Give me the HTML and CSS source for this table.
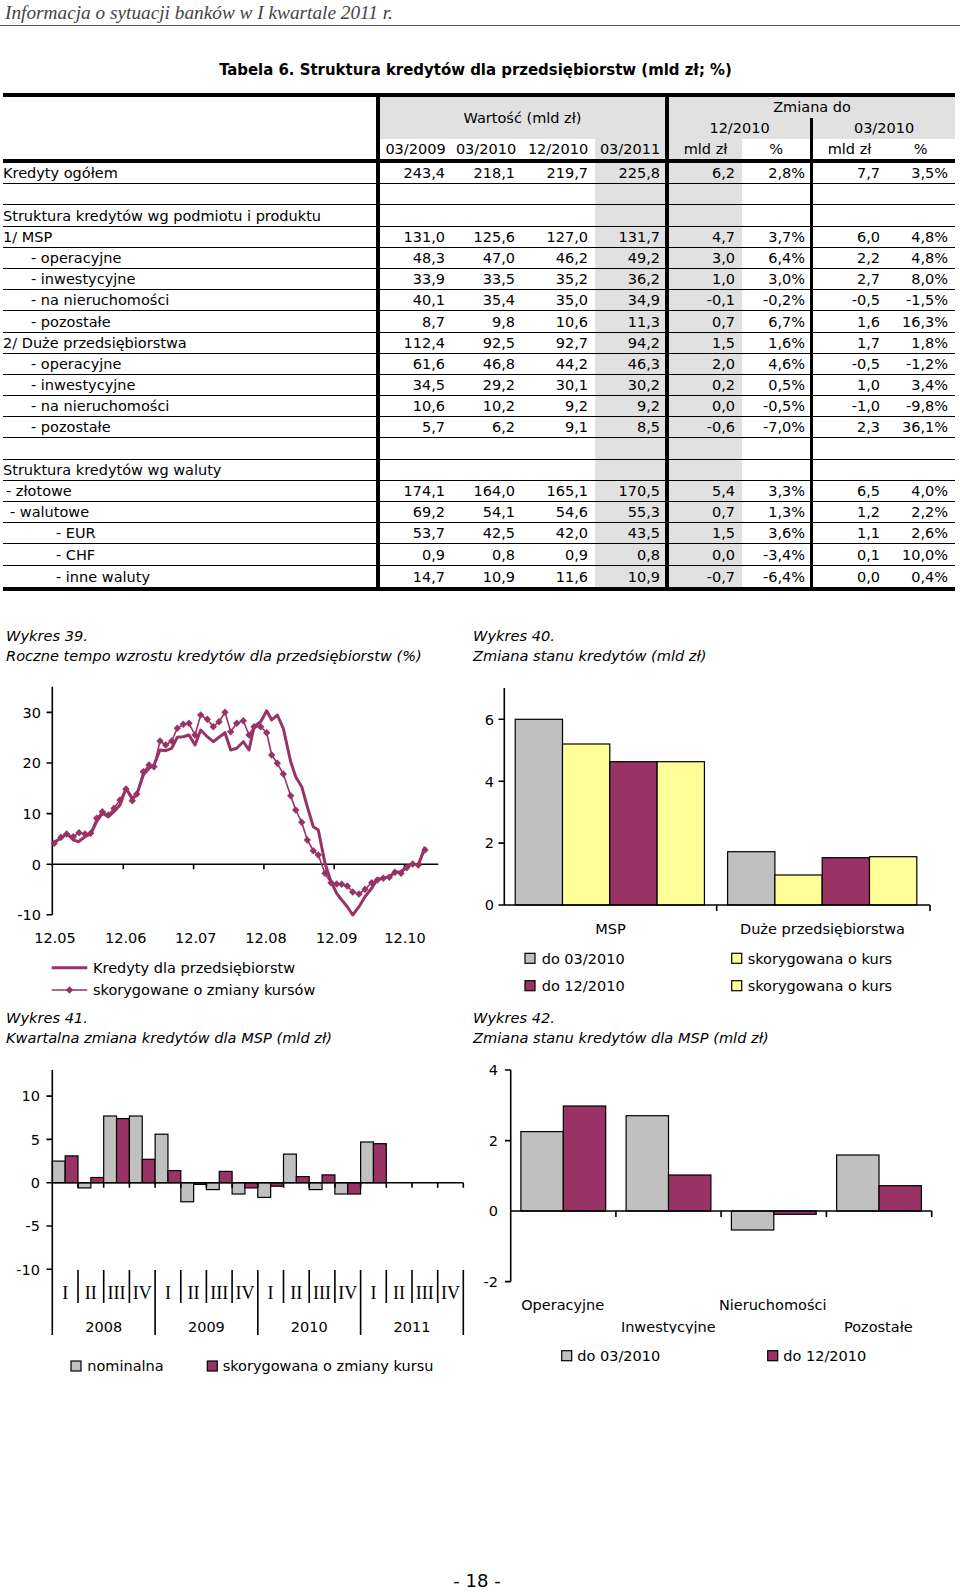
FILE: index.html
```html
<!DOCTYPE html>
<html lang="pl">
<head>
<meta charset="utf-8">
<title>Informacja o sytuacji banków w I kwartale 2011 r.</title>
<link rel="stylesheet" href="styles.css">
</head>
<body>
<header class="running-head">Informacja o sytuacji banków w I kwartale 2011 r.</header>

<h1 class="title">Tabela 6. Struktura kredytów dla przedsiębiorstw (mld zł; %)</h1>

<table class="tbl">
  <colgroup>
    <col class="w-lab"><col class="w1"><col class="w2"><col class="w3"><col class="w4">
    <col class="w5"><col class="w6"><col class="w7"><col class="w8">
  </colgroup>
  <thead>
    <tr class="h1">
      <th rowspan="3" class="corner"></th>
      <th colspan="4" rowspan="2" class="g b4">Wartość (mld zł)</th>
      <th colspan="4" class="g b4">Zmiana do</th>
    </tr>
    <tr class="h2">
      <th colspan="2" class="g b4">12/2010</th>
      <th colspan="2" class="g b3">03/2010</th>
    </tr>
    <tr class="h3">
      <th class="b4">03/2009</th><th>03/2010</th><th>12/2010</th><th class="g">03/2011</th>
      <th class="g b4">mld zł</th><th>%</th><th class="b3">mld zł</th><th>%</th>
    </tr>
  </thead>
  <tbody>
    <tr><td>Kredyty ogółem</td><td>243,4</td><td>218,1</td><td>219,7</td><td>225,8</td><td>6,2</td><td>2,8%</td><td>7,7</td><td>3,5%</td></tr>
    <tr><td></td><td></td><td></td><td></td><td></td><td></td><td></td><td></td><td></td></tr>
    <tr><td>Struktura kredytów wg podmiotu i produktu</td><td></td><td></td><td></td><td></td><td></td><td></td><td></td><td></td></tr>
    <tr><td>1/ MSP</td><td>131,0</td><td>125,6</td><td>127,0</td><td>131,7</td><td>4,7</td><td>3,7%</td><td>6,0</td><td>4,8%</td></tr>
    <tr><td class="d1">- operacyjne</td><td>48,3</td><td>47,0</td><td>46,2</td><td>49,2</td><td>3,0</td><td>6,4%</td><td>2,2</td><td>4,8%</td></tr>
    <tr><td class="d1">- inwestycyjne</td><td>33,9</td><td>33,5</td><td>35,2</td><td>36,2</td><td>1,0</td><td>3,0%</td><td>2,7</td><td>8,0%</td></tr>
    <tr><td class="d1">- na nieruchomości</td><td>40,1</td><td>35,4</td><td>35,0</td><td>34,9</td><td>-0,1</td><td>-0,2%</td><td>-0,5</td><td>-1,5%</td></tr>
    <tr><td class="d1">- pozostałe</td><td>8,7</td><td>9,8</td><td>10,6</td><td>11,3</td><td>0,7</td><td>6,7%</td><td>1,6</td><td>16,3%</td></tr>
    <tr><td>2/ Duże przedsiębiorstwa</td><td>112,4</td><td>92,5</td><td>92,7</td><td>94,2</td><td>1,5</td><td>1,6%</td><td>1,7</td><td>1,8%</td></tr>
    <tr><td class="d1">- operacyjne</td><td>61,6</td><td>46,8</td><td>44,2</td><td>46,3</td><td>2,0</td><td>4,6%</td><td>-0,5</td><td>-1,2%</td></tr>
    <tr><td class="d1">- inwestycyjne</td><td>34,5</td><td>29,2</td><td>30,1</td><td>30,2</td><td>0,2</td><td>0,5%</td><td>1,0</td><td>3,4%</td></tr>
    <tr><td class="d1">- na nieruchomości</td><td>10,6</td><td>10,2</td><td>9,2</td><td>9,2</td><td>0,0</td><td>-0,5%</td><td>-1,0</td><td>-9,8%</td></tr>
    <tr><td class="d1">- pozostałe</td><td>5,7</td><td>6,2</td><td>9,1</td><td>8,5</td><td>-0,6</td><td>-7,0%</td><td>2,3</td><td>36,1%</td></tr>
    <tr><td></td><td></td><td></td><td></td><td></td><td></td><td></td><td></td><td></td></tr>
    <tr><td>Struktura kredytów wg waluty</td><td></td><td></td><td></td><td></td><td></td><td></td><td></td><td></td></tr>
    <tr><td class="d0">- złotowe</td><td>174,1</td><td>164,0</td><td>165,1</td><td>170,5</td><td>5,4</td><td>3,3%</td><td>6,5</td><td>4,0%</td></tr>
    <tr><td class="dw">- walutowe</td><td>69,2</td><td>54,1</td><td>54,6</td><td>55,3</td><td>0,7</td><td>1,3%</td><td>1,2</td><td>2,2%</td></tr>
    <tr><td class="d2">- EUR</td><td>53,7</td><td>42,5</td><td>42,0</td><td>43,5</td><td>1,5</td><td>3,6%</td><td>1,1</td><td>2,6%</td></tr>
    <tr><td class="d2">- CHF</td><td>0,9</td><td>0,8</td><td>0,9</td><td>0,8</td><td>0,0</td><td>-3,4%</td><td>0,1</td><td>10,0%</td></tr>
    <tr><td class="d2">- inne waluty</td><td>14,7</td><td>10,9</td><td>11,6</td><td>10,9</td><td>-0,7</td><td>-6,4%</td><td>0,0</td><td>0,4%</td></tr>
  </tbody>
</table>

<section class="charts">
  <figure class="chart left">
    <figcaption class="cap">Wykres 39.<br>Roczne tempo wzrostu kredytów dla przedsiębiorstw (%)</figcaption>
    <svg class="plot" width="470" height="342" viewBox="0 666 470 342">
      <defs>
        <marker id="dia" viewBox="-4 -4 8 8" markerWidth="8" markerHeight="8" markerUnits="userSpaceOnUse">
          <path d="M0 -3.7 L3.7 0 L0 3.7 L-3.7 0Z" class="mk"/>
        </marker>
      </defs>
      <path class="ax" d="M52.3 686.7V914.8 M46.5 712.4H52.3 M46.5 763H52.3 M46.5 813.6H52.3 M46.5 864.2H52.3 M46.5 914.8H52.3 M52.3 864.2H438.3 M123.3 864.2v5 M193.6 864.2v5 M263.9 864.2v5 M334.2 864.2v5 M404.5 864.2v5"/>
      <g class="ct end">
        <text x="41" y="717.7">30</text>
        <text x="41" y="768.3">20</text>
        <text x="41" y="818.9">10</text>
        <text x="41" y="869.5">0</text>
        <text x="41" y="920.1">-10</text>
      </g>
      <g class="ct mid">
        <text x="55" y="943">12.05</text>
        <text x="125.7" y="943">12.06</text>
        <text x="195.7" y="943">12.07</text>
        <text x="266" y="943">12.08</text>
        <text x="336.7" y="943">12.09</text>
        <text x="405" y="943">12.10</text>
      </g>
      <polyline class="s-thick" points="52.3,843.3 61,838.3 66.7,833.3 73.3,840 78.3,841.7 85,836.7 90.7,834 96.7,821.7 102.3,813.3 108.3,816.7 114,811.7 120,805 126,788.3 132.3,798.3 136.7,795 143.3,775 149,768.3 154,765 160,750 165.7,750.7 171.7,748.3 177.3,737.3 183.3,736.7 189,735 195,745 200.7,730 207.3,736.7 213.3,741.7 219,737.3 225,732.7 230.7,750 236.7,748.3 243.3,741.7 249,750 254,726.7 260.7,721.7 266.7,710.7 271.7,720 277.3,715 283.3,728.3 290.7,761.7 295.7,776.7 301.7,786.7 307.3,806.7 313.3,826.7 318.3,830 325,863.3 331,881.7 336.7,893.3 341.7,900 347.3,906.7 352.7,915 359,906.7 365,896.7 371.7,888.3 377.3,879.3 383.3,878.3 389.3,876.7 395,872.3 401,871.7 406.7,866.7 412.7,864 418.3,865 425,846.7"/>
      <polyline class="s-thin" points="54.3,843.3 61,837.3 66.7,834 73.3,836.7 79,832.7 85,834 90.7,833.3 96.7,818.3 102.3,811.7 108.3,815 114,808.3 120,800 126,789 132.3,800.7 136.7,794 143.3,771.7 149,765 154,766.7 160,741 165.7,745 171.7,741 177.3,728.3 183.3,724.3 189,723.3 195,735 200.7,715 207.3,719.3 213.3,726.7 219,721.7 225,712.3 230.7,731.7 236.7,723.3 243.3,720.7 249,735 254,726.7 260.7,726.7 266.7,732.7 271.7,755 277.3,763.3 283.3,774 290.7,795.7 295.7,810 301.7,822.3 307.3,840 313.3,850.7 318.3,855 325,873.3 331,882.7 336.7,884 341.7,884.3 347.3,886 352.7,892 359,894 365,889.3 371.7,882.7 377.3,880 383.3,878.3 389.3,877.3 395,872.3 401,873.3 406.7,867.7 412.7,864 418.3,865 425,850"/>
      <line class="s-thick" x1="51.7" y1="967.7" x2="87.3" y2="967.7"/>
      <text class="ct" x="93" y="973">Kredyty dla przedsiębiorstw</text>
      <line class="s-leg" x1="51.7" y1="990" x2="87.3" y2="990"/>
      <path class="mk" d="M69.5 986.3 L73.2 990 L69.5 993.7 L65.8 990Z"/>
      <text class="ct" x="93" y="995.3">skorygowane o zmiany kursów</text>
    </svg>
  </figure>

  <figure class="chart right">
    <figcaption class="cap">Wykres 40.<br>Zmiana stanu kredytów (mld zł)</figcaption>
    <svg class="plot" width="490" height="342" viewBox="470 666 490 342">
      <rect class="b-grey" x="515.2" y="719.3" width="47.3" height="185.7"/>
      <rect class="b-yel" x="562.5" y="744" width="47.3" height="161"/>
      <rect class="b-mar" x="609.8" y="761.7" width="47.3" height="143.3"/>
      <rect class="b-yel" x="657.1" y="761.7" width="47.3" height="143.3"/>
      <rect class="b-grey" x="727.6" y="851.7" width="47.3" height="53.3"/>
      <rect class="b-yel" x="774.9" y="875" width="47.3" height="30"/>
      <rect class="b-mar" x="822.2" y="857.7" width="47.3" height="47.3"/>
      <rect class="b-yel" x="869.5" y="856.7" width="47.3" height="48.3"/>
      <path class="ax" d="M504.3 688V905 M498.5 719.3H504.3 M498.5 781.2H504.3 M498.5 843.1H504.3 M498.5 905H930 M716.7 905v6 M930 905v6"/>
      <g class="ct end">
        <text x="494" y="724.6">6</text>
        <text x="494" y="786.5">4</text>
        <text x="494" y="848.4">2</text>
        <text x="494" y="910.3">0</text>
      </g>
      <g class="ct mid">
        <text x="610.5" y="933.6">MSP</text>
        <text x="822.5" y="933.6">Duże przedsiębiorstwa</text>
      </g>
      <rect class="b-grey" x="525" y="953.3" width="10" height="10"/>
      <text class="ct" x="541.7" y="963.6">do 03/2010</text>
      <rect class="b-mar" x="525" y="980.7" width="10" height="10"/>
      <text class="ct" x="541.7" y="991">do 12/2010</text>
      <rect class="b-yel" x="731.7" y="953.3" width="10" height="10"/>
      <text class="ct" x="747.7" y="963.6">skorygowana o kurs</text>
      <rect class="b-yel" x="731.7" y="980.7" width="10" height="10"/>
      <text class="ct" x="747.7" y="991">skorygowana o kurs</text>
    </svg>
  </figure>

  <figure class="chart left">
    <figcaption class="cap">Wykres 41.<br>Kwartalna zmiana kredytów dla MSP (mld zł)</figcaption>
    <svg class="plot" width="470" height="342" viewBox="0 1048 470 342">
      <rect class="b-grey" x="52.3" y="1161.1" width="12.85" height="21.6"/>
      <rect class="b-mar" x="65.15" y="1155.9" width="12.85" height="26.8"/>
      <rect class="b-grey" x="78" y="1182.7" width="12.85" height="5.2"/>
      <rect class="b-mar" x="90.85" y="1177.5" width="12.85" height="5.2"/>
      <rect class="b-grey" x="103.7" y="1116" width="12.85" height="66.7"/>
      <rect class="b-mar" x="116.55" y="1118.6" width="12.85" height="64.1"/>
      <rect class="b-grey" x="129.4" y="1116" width="12.85" height="66.7"/>
      <rect class="b-mar" x="142.25" y="1159.3" width="12.85" height="23.4"/>
      <rect class="b-grey" x="155.1" y="1134.2" width="12.85" height="48.5"/>
      <rect class="b-mar" x="167.95" y="1170.6" width="12.85" height="12.1"/>
      <rect class="b-grey" x="180.8" y="1182.7" width="12.85" height="19.1"/>
      <rect class="b-mar" x="193.65" y="1182.7" width="12.85" height="1.7"/>
      <rect class="b-grey" x="206.4" y="1182.7" width="12.85" height="6.9"/>
      <rect class="b-mar" x="219.25" y="1171.4" width="12.85" height="11.3"/>
      <rect class="b-grey" x="232.1" y="1182.7" width="12.85" height="11.3"/>
      <rect class="b-mar" x="244.95" y="1182.7" width="12.85" height="5.2"/>
      <rect class="b-grey" x="257.8" y="1182.7" width="12.85" height="14.7"/>
      <rect class="b-mar" x="270.65" y="1182.7" width="12.85" height="3.5"/>
      <rect class="b-grey" x="283.5" y="1154.1" width="12.85" height="28.6"/>
      <rect class="b-mar" x="296.35" y="1176.6" width="12.85" height="6.1"/>
      <rect class="b-grey" x="309.2" y="1182.7" width="12.85" height="6.9"/>
      <rect class="b-mar" x="322.05" y="1174.9" width="12.85" height="7.8"/>
      <rect class="b-grey" x="334.9" y="1182.7" width="12.85" height="11.3"/>
      <rect class="b-mar" x="347.75" y="1182.7" width="12.85" height="11.3"/>
      <rect class="b-grey" x="360.6" y="1142" width="12.85" height="40.7"/>
      <rect class="b-mar" x="373.45" y="1143.7" width="12.85" height="39"/>
      <path class="ax" d="M52.3 1070V1335 M46.5 1096.1H52.3 M46.5 1139.4H52.3 M46.5 1182.7H463.3 M46.5 1226H52.3 M46.5 1269.3H52.3
        M78 1182.7v5 M103.7 1182.7v5 M129.4 1182.7v5 M155.1 1182.7v5 M180.8 1182.7v5 M206.4 1182.7v5 M232.1 1182.7v5 M257.8 1182.7v5
        M283.5 1182.7v5 M309.2 1182.7v5 M334.9 1182.7v5 M360.6 1182.7v5 M386.3 1182.7v5 M412 1182.7v5 M437.7 1182.7v5 M463.3 1182.7v5
        M78 1270V1303 M103.7 1270V1303 M129.4 1270V1303 M180.8 1270V1303 M206.4 1270V1303 M232.1 1270V1303
        M283.5 1270V1303 M309.2 1270V1303 M334.9 1270V1303 M386.3 1270V1303 M412 1270V1303 M437.7 1270V1303
        M155.1 1270V1335 M257.8 1270V1335 M360.6 1270V1335 M463.3 1270V1335"/>
      <g class="ct end">
        <text x="40" y="1101.4">10</text>
        <text x="40" y="1144.7">5</text>
        <text x="40" y="1188">0</text>
        <text x="40" y="1231.3">-5</text>
        <text x="40" y="1274.6">-10</text>
      </g>
      <g class="qt mid">
        <text x="65.2" y="1299.3">I</text><text x="90.8" y="1299.3">II</text><text x="116.5" y="1299.3">III</text><text x="142.2" y="1299.3">IV</text>
        <text x="167.9" y="1299.3">I</text><text x="193.6" y="1299.3">II</text><text x="219.3" y="1299.3">III</text><text x="245" y="1299.3">IV</text>
        <text x="270.6" y="1299.3">I</text><text x="296.3" y="1299.3">II</text><text x="322" y="1299.3">III</text><text x="347.7" y="1299.3">IV</text>
        <text x="373.4" y="1299.3">I</text><text x="399.1" y="1299.3">II</text><text x="424.8" y="1299.3">III</text><text x="450.5" y="1299.3">IV</text>
      </g>
      <g class="ct mid">
        <text x="103.7" y="1331.5">2008</text>
        <text x="206.4" y="1331.5">2009</text>
        <text x="309.2" y="1331.5">2010</text>
        <text x="412" y="1331.5">2011</text>
      </g>
      <rect class="b-grey" x="71" y="1361" width="10" height="10"/>
      <text class="ct" x="87.3" y="1371.3">nominalna</text>
      <rect class="b-mar" x="207.3" y="1361" width="10" height="10"/>
      <text class="ct" x="222.7" y="1371.3">skorygowana o zmiany kursu</text>
    </svg>
  </figure>

  <figure class="chart right">
    <figcaption class="cap">Wykres 42.<br>Zmiana stanu kredytów dla MSP (mld zł)</figcaption>
    <svg class="plot" width="490" height="342" viewBox="470 1048 490 342">
      <defs>
        <clipPath id="cut"><rect x="470" y="1048" width="490" height="285.5"/></clipPath>
      </defs>
      <rect class="b-grey" x="520.9" y="1131.6" width="42.4" height="79.4"/>
      <rect class="b-mar" x="563.3" y="1106" width="42.4" height="105"/>
      <rect class="b-grey" x="626.1" y="1115.7" width="42.4" height="95.3"/>
      <rect class="b-mar" x="668.5" y="1175" width="42.4" height="36"/>
      <rect class="b-grey" x="731.4" y="1211" width="42.4" height="19"/>
      <rect class="b-mar" x="773.8" y="1211" width="42.4" height="3.3"/>
      <rect class="b-grey" x="836.6" y="1155" width="42.4" height="56"/>
      <rect class="b-mar" x="879" y="1185.7" width="42.4" height="25.3"/>
      <path class="ax" d="M510.7 1070V1281.6 M504.9 1070H510.7 M504.9 1140.6H510.7 M504.9 1281.6H510.7 M510.7 1211H931.7 M615.9 1211v6 M721.1 1211v6 M826.4 1211v6 M931.7 1211v6"/>
      <g class="ct end">
        <text x="498" y="1075.3">4</text>
        <text x="498" y="1145.9">2</text>
        <text x="498" y="1216.3">0</text>
        <text x="498" y="1286.9">-2</text>
      </g>
      <g class="ct mid" clip-path="url(#cut)">
        <text x="562.7" y="1310">Operacyjne</text>
        <text x="668.3" y="1331.5">Inwestycyjne</text>
        <text x="772.7" y="1310">Nieruchomości</text>
        <text x="878.3" y="1331.5">Pozostałe</text>
      </g>
      <rect class="b-grey" x="561.7" y="1350.7" width="10" height="10"/>
      <text class="ct" x="577.3" y="1361">do 03/2010</text>
      <rect class="b-mar" x="767.7" y="1350.7" width="10" height="10"/>
      <text class="ct" x="783.3" y="1361">do 12/2010</text>
    </svg>
  </figure>
</section>

<footer class="pageno">- 18 -</footer>
</body>
</html>
```

FILE: styles.css
```css
html, body {
  margin: 0;
  padding: 0;
  background: #fff;
}

body {
  width: 960px;
  font-family: "DejaVu Sans", "Noto Sans", sans-serif;
  color: #000;
}

.running-head {
  height: 25px;
  padding-left: 5px;
  border-bottom: 1px solid #555;
  font-family: "Liberation Serif", serif;
  font-style: italic;
  font-size: 19.3px;
  line-height: 25px;
  color: #444;
}

.title {
  margin: 34px 0 0 0;
  padding-right: 9px;
  text-align: center;
  font-family: "DejaVu Sans Condensed", "DejaVu Sans", sans-serif;
  font-stretch: condensed;
  font-weight: bold;
  font-size: 16.6px;
  line-height: 20px;
}

/* ---------- table ---------- */
.tbl {
  margin: 13px 0 0 3px;
  width: 952px;
  table-layout: fixed;
  border-collapse: separate;
  border-spacing: 0;
  border-top: 4px solid #000;
  border-bottom: 4px solid #000;
  font-size: 14.5px;
}

.w-lab { width: 373px; }
.w1 { width: 75px; }
.w2 { width: 70px; }
.w3 { width: 74px; }
.w4 { width: 70px; }
.w5 { width: 77px; }
.w6 { width: 68px; }
.w7 { width: 76px; }
.w8 { width: 69px; }

.tbl th,
.tbl td {
  padding: 0;
  font-weight: normal;
  white-space: nowrap;
  overflow: hidden;
}

.tbl thead th {
  text-align: center;
  vertical-align: middle;
  line-height: 17px;
}

.h1, .h2 { height: 21px; }
.h3 { height: 24px; }
.h3 th, .corner { border-bottom: 4px solid #000; }

.g { background: #e1e1e1; }
.b4 { border-left: 4px solid #000; }
.b3 { border-left: 3px solid #000; }

.tbl tbody tr { height: 21.2px; }

.tbl tbody td {
  border-bottom: 1px solid #000;
  vertical-align: bottom;
  text-align: right;
  line-height: 17px;
  padding-bottom: 1px;
}

.tbl tbody tr:last-child td { border-bottom: 0; }

.tbl tbody td:nth-child(1) { text-align: left; padding-left: 0; }
.tbl tbody td:nth-child(2) { border-left: 4px solid #000; padding-right: 6px; }
.tbl tbody td:nth-child(3) { padding-right: 6px; }
.tbl tbody td:nth-child(4) { padding-right: 7px; }
.tbl tbody td:nth-child(5) { padding-right: 5px; background: #e1e1e1; }
.tbl tbody td:nth-child(6) { border-left: 4px solid #000; padding-right: 7px; background: #e1e1e1; }
.tbl tbody td:nth-child(7) { padding-right: 5px; }
.tbl tbody td:nth-child(8) { border-left: 3px solid #000; padding-right: 6px; }
.tbl tbody td:nth-child(9) { padding-right: 7px; }

.tbl tbody td.d0 { padding-left: 3px; }
.tbl tbody td.dw { padding-left: 7px; }
.tbl tbody td.d1 { padding-left: 28px; }
.tbl tbody td.d2 { padding-left: 53px; }

/* ---------- charts ---------- */
.charts {
  display: grid;
  grid-template-columns: 470px 490px;
  margin-top: 35px;
}

.chart {
  margin: 0;
}

.cap {
  font-style: italic;
  font-size: 14.6px;
  line-height: 20px;
  height: 40px;
}

.chart.left .cap { padding-left: 6px; }
.chart.right .cap { padding-left: 3px; }

.plot {
  display: block;
}

.ax {
  fill: none;
  stroke: #000;
  stroke-width: 1.6;
}

.ct {
  font-family: "DejaVu Sans", sans-serif;
  font-size: 14.5px;
  fill: #000;
}

.qt {
  font-family: "Liberation Serif", serif;
  font-size: 18px;
  fill: #000;
}

.end { text-anchor: end; }
.mid { text-anchor: middle; }

.s-thick {
  fill: none;
  stroke: #993366;
  stroke-width: 3;
  stroke-linejoin: round;
}

.s-thin {
  fill: none;
  stroke: #993366;
  stroke-width: 1.6;
  stroke-linejoin: round;
  marker-start: url(#dia);
  marker-mid: url(#dia);
  marker-end: url(#dia);
}

.s-leg {
  stroke: #993366;
  stroke-width: 1.6;
}

.mk { fill: #993366; }

.b-grey { fill: #c0c0c0; stroke: #000; stroke-width: 1.2; }
.b-mar { fill: #993366; stroke: #000; stroke-width: 1.2; }
.b-yel { fill: #ffff99; stroke: #000; stroke-width: 1.2; }

.pageno {
  margin-top: 181px;
  padding-right: 6px;
  text-align: center;
  font-size: 18px;
  line-height: 20px;
}
```
